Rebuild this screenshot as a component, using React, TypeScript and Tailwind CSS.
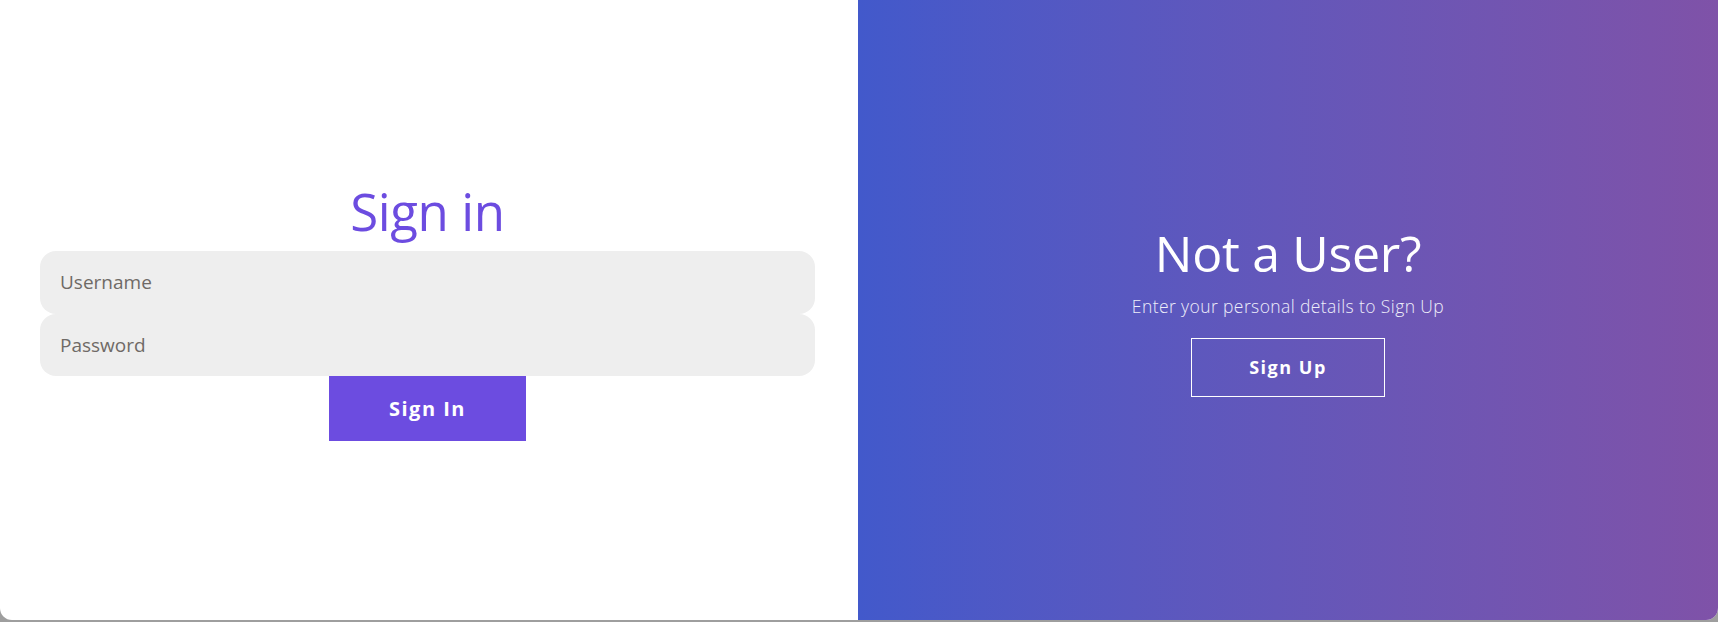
import React from "react";

export default function App() {
  const font = { fontFamily: '"Open Sans", "Noto Sans", Arial, sans-serif' };
  return (
    <div className="w-[1718px] h-[622px] bg-[#9e9e9e] overflow-hidden" style={font}>
      <div className="flex h-[620px] w-full rounded-b-[12px] overflow-hidden bg-white">
        <div className="w-[858px] h-full flex flex-col items-center justify-center pl-10 pr-[43px] pt-[7px]">
          <h1 className="text-[51px] leading-none text-[#6c4ce0] font-normal tracking-[-0.4px] mb-[14px]">Sign in</h1>
          <div className="w-full flex flex-col">
            <div className="h-[63px] w-full bg-[#eeeeee] rounded-[16px] flex items-center pl-5 text-[19px] text-[#6f6a66]">
              Username
            </div>
            <div className="h-[62px] w-full bg-[#eeeeee] rounded-[16px] flex items-center pl-5 text-[19px] text-[#6f6a66]">
              Password
            </div>
          </div>
          <button className="w-[197px] h-[65px] bg-[#6c4ce0] text-white font-bold text-[20px] tracking-[1.5px]">
            Sign In
          </button>
        </div>
        <div className="flex-1 h-full flex flex-col items-center justify-center pt-[5px] bg-gradient-to-r from-[#4259cb] to-[#7f52a8] text-white">
          <h2 className="text-[50px] leading-none font-normal tracking-[-0.3px]">Not a User?</h2>
          <p className="mt-[15px] text-[17.5px] font-light tracking-[0.4px] text-[#eeeefa]">Enter your personal details to Sign Up</p>
          <button className="mt-[19px] w-[194px] h-[59px] border border-white text-white font-bold text-[18px] tracking-[1.5px]">
            Sign Up
          </button>
        </div>
      </div>
    </div>
  );
}
